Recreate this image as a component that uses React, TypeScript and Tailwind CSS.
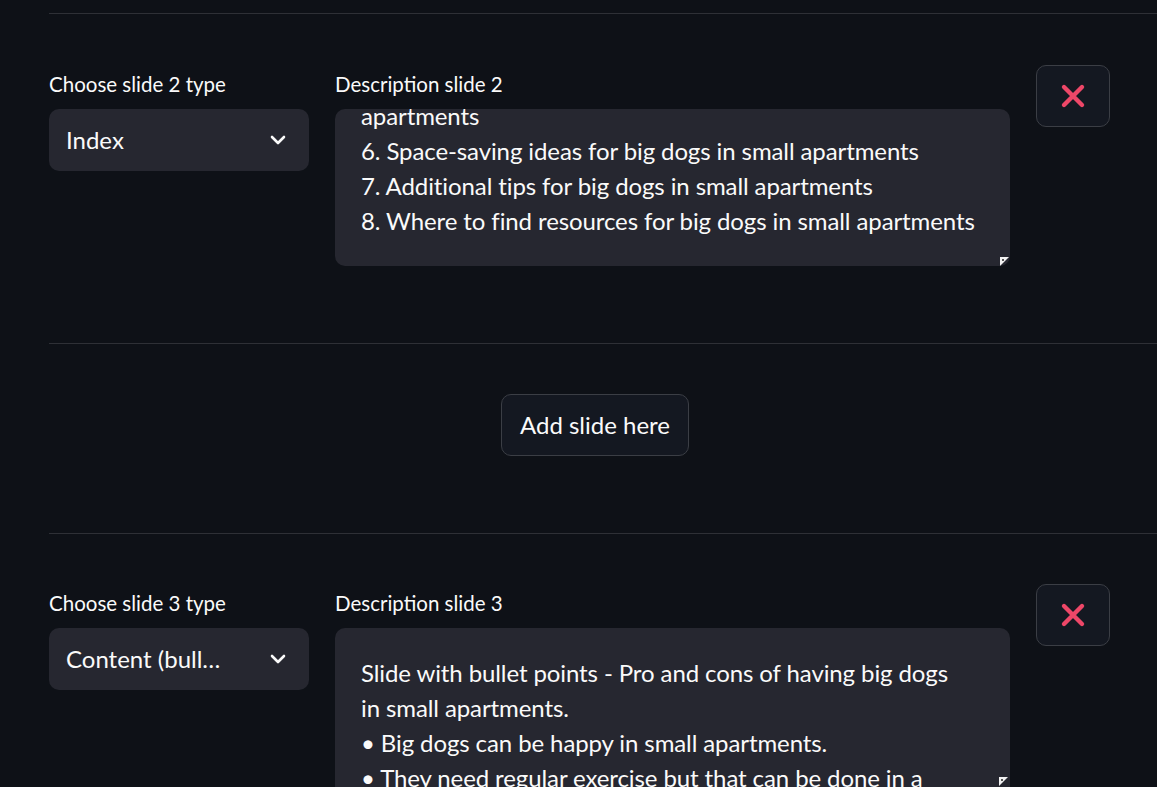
import { ReactNode } from 'react';

const font = { fontFamily: 'Lato, "Noto Sans", sans-serif' };

function Chevron() {
  return (
    <svg width="16" height="10" viewBox="0 0 16 10" fill="none">
      <path d="M2 2l6 6 6-6" stroke="#fafafa" strokeWidth="2.6" strokeLinecap="round" strokeLinejoin="round" />
    </svg>
  );
}

function Resizer() {
  return (
    <svg className="absolute right-[1px] bottom-0" width="9" height="9" viewBox="0 0 9 9">
      <polygon points="0,0 9,0 0,9" fill="#f2f2f2" />
      <rect x="2" y="2" width="2" height="2" fill="#555" />
    </svg>
  );
}

function Divider() {
  return <div className="h-px bg-[#2e3036]" />;
}

function Label({ children }: { children: ReactNode }) {
  return <div className="h-[44px] pt-[7px] text-[20.5px] leading-[24px]">{children}</div>;
}

function DeleteButton() {
  return (
    <button className="flex h-[62px] w-[74px] items-center justify-center rounded-[10px] border border-[#3b3e45] bg-[#141821]">
      <svg width="26" height="26" viewBox="0 0 26 26">
        <path d="M4 4l18 18M22 4L4 22" stroke="#ee4768" strokeWidth="4.4" strokeLinecap="round" />
      </svg>
    </button>
  );
}

function SlideRow({ n, type, lines, scrolled }: { n: number; type: string; lines: string[]; scrolled?: boolean }) {
  return (
    <div className="flex items-start gap-[26px]">
      <div className="w-[260px]">
        <Label>Choose slide {n} type</Label>
        <div className="flex h-[62px] items-center justify-between rounded-[10px] bg-[#262730] pl-[17px] pr-[23px] text-[24px]">
          <span>{type}</span>
          <Chevron />
        </div>
      </div>
      <div className="w-[675px]">
        <Label>Description slide {n}</Label>
        <div
          className={
            scrolled
              ? 'relative flex h-[157px] flex-col justify-end overflow-hidden rounded-[10px] bg-[#262730] px-[26px] pb-[28px] text-[24px] leading-[35px] tracking-[-0.1px]'
              : 'relative h-[170px] overflow-hidden rounded-t-[10px] bg-[#262730] px-[26px] pt-[27px] text-[24px] leading-[35px] tracking-[-0.1px]'
          }
        >
          {lines.map((l, i) => (
            <div key={i}>{l}</div>
          ))}
          {scrolled ? <Resizer /> : <div className="absolute right-[1px] top-[158px]"><Resizer /></div>}
        </div>
      </div>
      <DeleteButton />
    </div>
  );
}

export default function App() {
  return (
    <div className="h-[787px] w-full overflow-hidden bg-[#0e1117] pl-[49px] pt-[13px] text-[#fafafa]" style={font}>
      <Divider />
      <div className="mt-[51px]">
        <SlideRow
          n={2}
          type="Index"
          scrolled
          lines={[
            '1. Introduction',
            '2. Benefits of big dogs in small apartments',
            '3. Challenges of big dogs in small apartments',
            '4. Choosing the right breed for small apartments',
            '5. Exercise and training for big dogs in small',
            'apartments',
            '6. Space-saving ideas for big dogs in small apartments',
            '7. Additional tips for big dogs in small apartments',
            '8. Where to find resources for big dogs in small apartments',
          ]}
        />
      </div>
      <div className="mt-[77px]">
        <Divider />
      </div>
      <div className="mt-[50px] flex w-[1092px] justify-center">
        <button className="h-[62px] w-[188px] rounded-[10px] border border-[#3b3e45] bg-[#141821] text-[24px]">
          Add slide here
        </button>
      </div>
      <div className="mt-[77px]">
        <Divider />
      </div>
      <div className="mt-[50px]">
        <SlideRow
          n={3}
          type="Content (bull…"
          lines={[
            'Slide with bullet points - Pro and cons of having big dogs',
            'in small apartments.',
            '• Big dogs can be happy in small apartments.',
            '• They need regular exercise but that can be done in a',
          ]}
        />
      </div>
    </div>
  );
}
